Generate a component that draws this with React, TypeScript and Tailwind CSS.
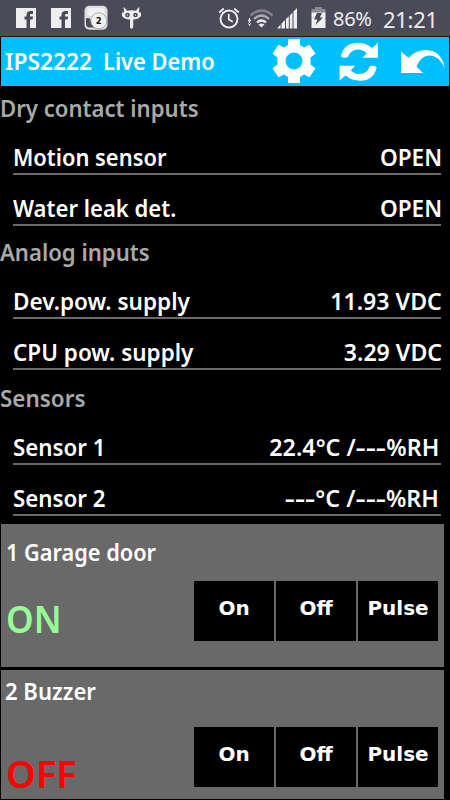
import { clsx } from 'clsx'

interface Reading {
  name: string
  value: string
  nameClass: string
  valueClass: string
}

interface Group {
  title: string
  headingClass: string
  titleClass: string
  readings: Reading[]
}

interface Output {
  name: string
  state: 'ON' | 'OFF'
}

const groups: Group[] = [
  {
    title: 'Dry contact inputs',
    headingClass: 'h-[38px]',
    titleClass: 'scale-x-[0.922]',
    readings: [
      { name: 'Motion sensor', value: 'OPEN', nameClass: 'scale-x-[0.912]', valueClass: 'scale-x-[0.94]' },
      { name: 'Water leak det.', value: 'OPEN', nameClass: 'scale-x-[0.92]', valueClass: 'scale-x-[0.94]' }
    ]
  },
  {
    title: 'Analog inputs',
    headingClass: 'h-[42px]',
    titleClass: 'scale-x-[0.922]',
    readings: [
      { name: 'Dev.pow. supply', value: '11.93 VDC', nameClass: 'scale-x-[0.94]', valueClass: 'scale-x-[0.963]' },
      { name: 'CPU pow. supply', value: '3.29 VDC', nameClass: 'scale-x-[0.937]', valueClass: 'scale-x-[0.963]' }
    ]
  },
  {
    title: 'Sensors',
    headingClass: 'h-[44px]',
    titleClass: 'scale-x-[0.935]',
    readings: [
      { name: 'Sensor 1', value: '22.4°C /---%RH', nameClass: 'scale-x-[0.93]', valueClass: 'mr-[3px] scale-x-[0.97]' },
      { name: 'Sensor 2', value: '---°C /---%RH', nameClass: 'scale-x-[0.93]', valueClass: 'mr-[3px] scale-x-[0.97]' }
    ]
  }
]

function FacebookIcon() {
  return (
    <svg width="20" height="20" viewBox="0 0 20 20">
      <path
        fill="#eeeeee"
        fillRule="evenodd"
        d="M0 0h20v20H0zM10.500 20v-8.500h-2v-3h2V7c0-2.500 1.500-4 4-4H17v3h-1.500c-1 0-1.500.5-1.500 1.200v1.300h3l-.4 3H14V20z"
      />
    </svg>
  )
}

function ClockBadgeIcon() {
  return (
    <svg width="25" height="26" viewBox="0 0 25 26">
      <rect x="0.500" y="0.800" width="23" height="24" rx="5" fill="#dedede" />
      <rect x="3.500" y="3" width="17" height="8" rx="3" fill="#f1f1f1" />
      <path fill="#4b4a59" d="M2 13l4 .5 1.500 4.500 4 4.500H5q-3-.5-3-3.500z" />
      <circle cx="14.800" cy="15.800" r="8" fill="#f1f1f1" stroke="#a5a5a5" strokeWidth="0.900" />
      <text x="14.800" y="19" textAnchor="middle" fontSize="8.500" fontWeight="700" fontFamily="DejaVu Sans, sans-serif" fill="#111">2</text>
    </svg>
  )
}

function CyanogenIcon() {
  return (
    <svg width="19" height="23" viewBox="0 0 19 23" fill="#eeeeee">
      <path d="M1.500.5h1L5 3.800q4.500-1 9 0L16.500.5h1l-.7 4q1.500 1.500 1.500 4 0 4-8.800 4.200Q.7 12.500.7 8.500q0-2.500 1.500-4z" />
      <path d="M8 12h3.200v8.500L9.600 22 8 20.500zM0 5.500h1.500v4H0zM17.500 5.500H19v4h-1.500z" />
      <circle cx="5.500" cy="8" r="2.300" fill="#4b4a59" />
      <circle cx="13.500" cy="8" r="2.300" fill="#4b4a59" />
      <circle cx="5.500" cy="8" r="0.700" />
      <circle cx="13.500" cy="8" r="0.700" />
    </svg>
  )
}

function AlarmIcon() {
  return (
    <svg width="22" height="22" viewBox="0 0 22 22" fill="none" stroke="#eeeeee">
      <circle cx="11" cy="12" r="8.500" strokeWidth="1.900" />
      <path strokeWidth="1.700" d="M10.800 7v5.500l4 2.200M1.200 5.500l4.600-4M16.200 1.500l4.600 4" />
    </svg>
  )
}

function WifiIcon() {
  return (
    <svg width="26" height="19" viewBox="0 0 26 19" fill="none">
      <path stroke="#85848e" strokeWidth="2.400" d="M2.500 6.500q11-10 22 0" />
      <path stroke="#aeadb5" strokeWidth="2.200" d="M6 10q7.500-7 15 0" />
      <path stroke="#eeeeee" strokeWidth="2.200" d="M9 13.500q4.500-4 9 0" />
      <path fill="#eeeeee" d="M10.500 15.500q3-2 6 0l-3 3zM1.500 8.500L3 12H0zM1.500 17.500L3 14H0zM.8 11h1.400v4H.8z" />
    </svg>
  )
}

function SignalIcon() {
  return (
    <svg width="21" height="21" viewBox="0 0 21 21" fill="#eeeeee">
      <path d="M0 20.500h3.500V16.500zM4.500 15.500L8 12v8.500H4.500zM9 11l2.800-2.800v12.300H9zM12.800 7.500l2.700-3v16h-2.700zM16.500 3.500L20 0v20.500h-3.500z" />
    </svg>
  )
}

function BatteryIcon() {
  return (
    <svg width="15" height="22" viewBox="0 0 15 22">
      <path fill="#8b8a92" d="M4 0h7v2h3.500v4H.5V2H4z" />
      <path fill="#eeeeee" d="M.5 5.500h14V21H.5z" />
      <path fill="#4b4a59" d="M6 6h5L8.800 10.500H12L4.500 18l2-5.500H3z" />
    </svg>
  )
}

function GearIcon() {
  return (
    <svg width="46" height="46" viewBox="-23 -23 46 46" fill="#ffffff">
      <path
        fillRule="evenodd"
        d="M-6-22H6v6l4 2.500 5.500-2.700 6 9L16.500-3.500v7l5 3.700-6 9-5.500-2.700L6 16v6H-6v-6l-4-2.500-5.500 2.700-6-9 5-3.700v-7l-5-3.700 6-9 5.500 2.700L-6-16zM0-8.500a8.500 8.500 0 1 0 0 17 8.500 8.500 0 1 0 0-17z"
      />
    </svg>
  )
}

function RefreshIcon() {
  const arrow = 'M2 13.500Q5.500.8 18.500.8 27 .8 33 6L39 1v14.800H23.500l4.300-4.600Q24 7.500 19 7.500 11.500 7.500 9 15 7.500 16 5 15.800 2 15.500 2 13.500z'
  return (
    <svg width="40" height="40" viewBox="0 0 40 40" fill="#ffffff">
      <path d={arrow} />
      <path d={arrow} transform="rotate(180 19.800 19.800)" />
    </svg>
  )
}

function BackIcon() {
  return (
    <svg width="45" height="24" viewBox="0 0 45 24" fill="#ffffff">
      <path d="M0 1.500l7.500 6.200Q15 0 25 0 40.500.5 43.800 18.500 38 5 27.500 5.500q-8 1-12 11L22 23H0z" />
    </svg>
  )
}

function StatusBar() {
  return (
    <div className="flex h-9 items-center bg-[#4b4a59] pl-4 pr-[13px] text-[#eeeeee]">
      <div className="flex items-center">
        <FacebookIcon />
        <div className="ml-[15px]"><FacebookIcon /></div>
        <div className="ml-[13px]"><ClockBadgeIcon /></div>
        <div className="ml-[13px]"><CyanogenIcon /></div>
      </div>
      <div className="ml-auto flex items-center">
        <AlarmIcon />
        <div className="ml-[8px]"><WifiIcon /></div>
        <div className="ml-[3px]"><SignalIcon /></div>
        <div className="ml-[13px]"><BatteryIcon /></div>
        <span className="ml-[7px] mt-[2px] w-[40px] whitespace-nowrap text-[20px] leading-6 tracking-[-0.3px]">86%</span>
        <span className="ml-[10px] mt-px w-[54px] whitespace-nowrap text-[22px] leading-6 tracking-[-0.3px]">21:21</span>
      </div>
    </div>
  )
}

function TitleBar() {
  return (
    <div className="mx-px flex h-[50px] items-center border-t border-[#3a0a10] bg-[#00bfff] pl-[4px]">
      <h1 className="-mt-[2px] flex w-[266px] whitespace-pre text-[24px] font-semibold leading-6 text-white">
        <span className="w-[98px] origin-left scale-x-[0.95]">IPS2222  </span>
        <span className="origin-left scale-x-[0.91]">Live Demo</span>
      </h1>
      <button className="-mt-px"><GearIcon /></button>
      <button className="ml-[22px]"><RefreshIcon /></button>
      <button className="ml-[22px]"><BackIcon /></button>
    </div>
  )
}

// A run of dashes stands for a missing reading and is drawn wider than plain hyphens
function ReadingValue({ value }: { value: string }) {
  return (
    <>
      {value.split(/(---)/).map((part, i) =>
        part === '---' ? (
          <span key={i} className="inline-block w-[31.500px]">
            <span className="inline-block origin-left scale-x-[1.360]">{part}</span>
          </span>
        ) : (
          part
        )
      )}
    </>
  )
}

function ReadingRow({ name, value, nameClass, valueClass }: Reading) {
  return (
    <div className="ml-[13px] mr-[9px] flex h-[51px] flex-col justify-end">
      <div className="-mr-px flex justify-between whitespace-nowrap text-[24px] font-semibold leading-6 text-white">
        <span className={clsx('origin-left', nameClass)}>{name}</span>
        <span className={clsx('origin-right', valueClass)}>
          <ReadingValue value={value} />
        </span>
      </div>
      <div className="mt-[4px] h-[2px] bg-[#6a6a6a]" />
    </div>
  )
}

function OutputPanel({ name, state, last }: Output & { last?: boolean }) {
  return (
    <section className={clsx('ml-px mr-[6px] flex flex-col bg-[#696969] px-[6px]', last ? 'mt-[3px] h-[129px]' : 'mt-2 h-[143px]')}>
      <h2
        className={clsx(
          'origin-left whitespace-nowrap text-[24px] font-semibold leading-6 text-white',
          last ? '-ml-[2px] mt-[9px] scale-x-[0.92]' : '-ml-px mt-[16px] scale-x-[0.905]'
        )}
      >
        {name}
      </h2>
      <div className={clsx('flex justify-between', last ? 'mt-[24px]' : 'mt-[17px]')}>
        <span
          className={clsx(
            '-ml-px origin-left text-[38px] font-semibold leading-10',
            state === 'ON' ? 'scale-x-[0.925] text-[#98fb98]' : 'text-[#ff0000]',
            last ? 'mt-[26px]' : 'mt-[17px]'
          )}
        >
          {state}
        </span>
        <div className="flex h-[60px] gap-[2px]">
          {['On', 'Off', 'Pulse'].map((label) => (
            <button key={label} className="w-20 bg-black pb-[6px] font-['DejaVu_Sans'] text-[20px] font-bold leading-6 text-white">
              {label}
            </button>
          ))}
        </div>
      </div>
    </section>
  )
}

export default function App() {
  return (
    <main className="h-[800px] w-[450px] overflow-hidden bg-black font-['Noto_Sans',sans-serif]">
      <StatusBar />
      <TitleBar />
      {groups.map((group) => (
        <div key={group.title}>
          <div className={clsx('flex items-end pb-[4px]', group.headingClass)}>
            <h2 className={clsx('origin-left whitespace-nowrap text-[24px] font-semibold leading-6 text-[#a9a9a9]', group.titleClass)}>
              {group.title}
            </h2>
          </div>
          {group.readings.map((reading) => (
            <ReadingRow key={reading.name} {...reading} />
          ))}
        </div>
      ))}
      <OutputPanel name="1 Garage door" state="ON" />
      <OutputPanel name="2 Buzzer" state="OFF" last />
    </main>
  )
}
